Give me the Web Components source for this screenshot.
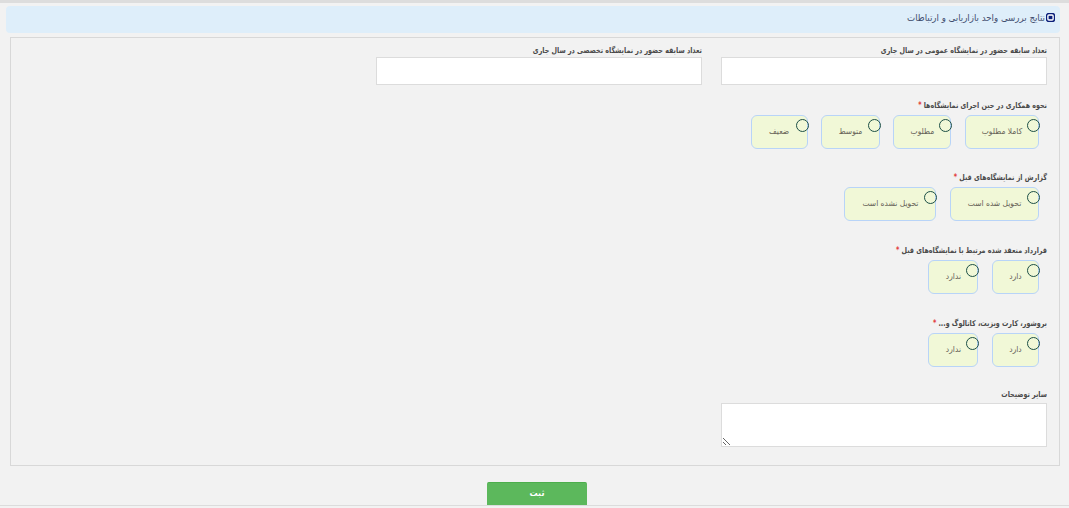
<!DOCTYPE html>
<html lang="fa" dir="rtl">
<head>
<meta charset="utf-8">
<title>نتایج بررسی</title>
<style>
    html, body { margin: 0; padding: 0; height: 100%; }
    body { background: #f2f2f2; font-family: "DejaVu Sans Condensed", "DejaVu Sans", sans-serif; font-stretch: condensed; overflow: hidden; }
</style>
</head>
<body>
<review-page>
    <section-header>نتایج بررسی واحد بازاریابی و ارتباطات</section-header>
    <form-panel>
        <form-row>
            <text-field label="تعداد سابقه حضور در نمایشگاه عمومی در سال جاری"></text-field>
            <text-field label="تعداد سابقه حضور در نمایشگاه تخصصی در سال جاری"></text-field>
        </form-row>
        <choice-group label="نحوه همکاری در حین اجرای نمایشگاه‌ها" required style="margin-top:15px">
            <choice-card w="74">کاملا مطلوب</choice-card>
            <choice-card w="58">مطلوب</choice-card>
            <choice-card w="58.6">متوسط</choice-card>
            <choice-card w="57">ضعیف</choice-card>
        </choice-group>
        <choice-group label="گزارش از نمایشگاه‌های قبل" required style="margin-top:23px">
            <choice-card w="89">تحویل شده است</choice-card>
            <choice-card w="92">تحویل نشده است</choice-card>
        </choice-group>
        <choice-group label="قرارداد منعقد شده مرتبط با نمایشگاه‌های قبل" required style="margin-top:24px">
            <choice-card w="47">دارد</choice-card>
            <choice-card w="50">ندارد</choice-card>
        </choice-group>
        <choice-group label="بروشور، کارت ویزیت، کاتالوگ و..." required style="margin-top:24px">
            <choice-card w="47">دارد</choice-card>
            <choice-card w="50">ندارد</choice-card>
        </choice-group>
        <note-field label="سایر توضیحات" style="margin-top:22px"></note-field>
    </form-panel>
    <submit-bar>ثبت</submit-bar>
</review-page>

<script>
// small helper, every element gets its own open shadow root
class Base extends HTMLElement {
    render(html) {
        this.attachShadow({ mode: 'open' }).innerHTML = html;
    }
}

class ReviewPage extends Base {
    constructor() {
        super();
        this.render(`<style>
            :host { display: block; height: 508px; border-top: 3px solid #dddddd; box-sizing: border-box; padding: 3px 9px 0 9px; }
        </style><slot></slot>`);
    }
}

class SectionHeader extends Base {
    constructor() {
        super();
        this.render(`<style>
            :host { display: flex; align-items: flex-start; gap: 1px; height: 27px; box-sizing: border-box; margin-left: -3px;
                padding: 7px 5px 0 0; background: #deeefa; border-radius: 4px; color: #3f4d6e; font-size: 9.6px; line-height: 12px; }
            svg { flex: none; }
            span { margin-top: -1px; }
        </style>
        <svg width="9" height="9" viewBox="0 0 9 9"><rect x="0.5" y="0.5" width="8" height="8" rx="2.4" fill="#fff" stroke="#0b1f7a" stroke-width="1.4"/><rect x="2.6" y="2.8" width="3.8" height="3.4" fill="#0b1f7a"/></svg>
        <span><slot></slot></span>`);
    }
}

class FormPanel extends Base {
    constructor() {
        super();
        this.render(`<style>
            :host { display: block; height: 429px; box-sizing: border-box; margin: 4px 0 0 1px; padding: 7px 12px 0 0; border: 1px solid #d8d8d8; }
        </style><slot></slot>`);
    }
}

class FormRow extends Base {
    constructor() {
        super();
        this.render(`<style>
            :host { display: grid; grid-template-columns: 326px 326px; column-gap: 19px; }
        </style><slot></slot>`);
    }
}

// the real font is narrower than DejaVu, so the labels get squeezed a bit
const labelCss = `
    .lbl { display: block; font-size: 8px; font-weight: bold; line-height: 12px; color: #4a4a4a; white-space: nowrap;
        transform: scaleX(.885); transform-origin: right center; }
    .req { color: #e23b3b; }
`;

class TextField extends Base {
    constructor() {
        super();
        this.render(`<style>
            :host { display: block; width: 326px; }
            ${labelCss}
            input { display: block; width: 100%; height: 28px; box-sizing: border-box; margin-top: 0; border: 1px solid #dcdcdc; background: #fff; outline: none; padding: 0 4px; }
        </style>
        <span class="lbl">${this.getAttribute('label')}</span><input type="text">`);
    }
}

class ChoiceGroup extends Base {
    constructor() {
        super();
        const star = this.hasAttribute('required') ? ' <span class="req">*</span>' : '';
        this.render(`<style>
            :host { display: block; width: 326px; }
            ${labelCss}
            .opts { display: flex; gap: 13.6px; margin-top: 3px; padding-right: 8px; }
        </style>
        <span class="lbl">${this.getAttribute('label')}${star}</span>
        <div class="opts"><slot></slot></div>`);
    }
}

class ChoiceCard extends Base {
    constructor() {
        super();
        this.render(`<style>
            :host { display: flex; align-items: center; justify-content: center; position: relative; box-sizing: border-box;
                width: ${this.getAttribute('w')}px; height: 34px; padding-bottom: 3px; background: #f1f8d7; border: 1px solid #b8d4f8; border-radius: 6px;
                color: #666257; font-size: 8.4px; white-space: nowrap; }
            i { position: absolute; top: 3px; right: -2px; width: 13px; height: 13px; box-sizing: border-box; border: 1.5px solid #1c4f46; border-radius: 50%; }
        </style><i></i><slot></slot>`);
    }
}

class NoteField extends Base {
    constructor() {
        super();
        this.render(`<style>
            :host { display: block; width: 326px; }
            ${labelCss}
            .lbl { margin-bottom: 2px; }
            textarea { display: block; width: 100%; height: 44px; box-sizing: border-box; border: 1px solid #dcdcdc; background: #fff; outline: none; margin: 0; padding: 2px; }
        </style>
        <span class="lbl">${this.getAttribute('label')}</span><textarea dir="rtl"></textarea>`);
    }
}

class SubmitBar extends Base {
    constructor() {
        super();
        this.render(`<style>
            :host { display: block; position: fixed; left: 0; right: 0; top: 482px; height: 26px; box-sizing: border-box; }
            .wrap { display: flex; justify-content: center; border-bottom: 1px solid #dcdcdc; height: 23px; padding-left: 5px; }
            button { width: 100px; height: 23px; border: 0; border-top: 1px solid #4cae4c; border-radius: 2px 2px 0 0; background: #5cb85c; color: #fff;
                font: bold 9px "DejaVu Sans Condensed", "DejaVu Sans", sans-serif; padding: 0 0 3px; }
        </style>
        <div class="wrap"><button type="button"><slot></slot></button></div>`);
    }
}

customElements.define('review-page', ReviewPage);
customElements.define('section-header', SectionHeader);
customElements.define('form-panel', FormPanel);
customElements.define('form-row', FormRow);
customElements.define('text-field', TextField);
customElements.define('choice-group', ChoiceGroup);
customElements.define('choice-card', ChoiceCard);
customElements.define('note-field', NoteField);
customElements.define('submit-bar', SubmitBar);
</script>
</body>
</html>
